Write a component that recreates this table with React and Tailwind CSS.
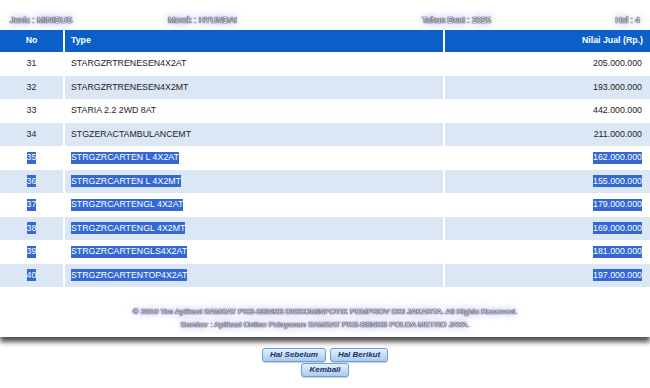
import React from 'react';

const rows = [
  { no: 31, type: 'STARGZRTRENESEN4X2AT', nilai: '205.000.000' },
  { no: 32, type: 'STARGZRTRENESEN4X2MT', nilai: '193.000.000' },
  { no: 33, type: 'STARIA 2.2 2WD 8AT', nilai: '442.000.000' },
  { no: 34, type: 'STGZERACTAMBULANCEMT', nilai: '211.000.000' },
  { no: 35, type: 'STRGZRCARTEN L 4X2AT', nilai: '162.000.000', sel: true },
  { no: 36, type: 'STRGZRCARTEN L 4X2MT', nilai: '155.000.000', sel: true },
  { no: 37, type: 'STRGZRCARTENGL 4X2AT', nilai: '179.000.000', sel: true },
  { no: 38, type: 'STRGZRCARTENGL 4X2MT', nilai: '169.000.000', sel: true },
  { no: 39, type: 'STRGZRCARTENGLS4X2AT', nilai: '181.000.000', sel: true },
  { no: 40, type: 'STRGZRCARTENTOP4X2AT', nilai: '197.000.000', sel: true },
];

const glow =
  'text-[#f4f4f4] [text-shadow:0_0_1px_#1c1c3a,0_0_1px_#1c1c3a,0_0_1px_#1c1c3a,0_0_8px_#8f8ff0,0_0_8px_#b0b0f5]';

const Cell = ({ sel, children }) =>
  sel ? <span className="bg-[#3469d4] text-white leading-[11px] py-[0.5px]">{children}</span> : children;

const Btn = ({ children }) => (
  <button className="h-[14px] px-[7px] rounded-[3px] border border-[#6f9fd6] bg-gradient-to-b from-[#e2f0fd] to-[#a8ccef] text-[8px] font-bold italic leading-none text-[#1b2f66] shadow-[0_1px_1px_rgba(0,0,0,0.2)]">
    {children}
  </button>
);

export default function App() {
  return (
    <div className="w-[650px] h-[388px] bg-white font-['Liberation_Sans',Arial,sans-serif] overflow-hidden">
      <div className="bg-white shadow-[0_5px_5px_rgba(70,70,70,0.95)]">
        <div className="h-[30px] pt-[14px] flex text-[8.5px] leading-[12px]">
          <div className={`pl-[10px] w-[168px] ${glow}`}>Jenis : MINIBUS</div>
          <div className={`w-[254px] ${glow}`}>Merek : HYUNDAI</div>
          <div className={`flex-1 ${glow}`}>Tahun Buat : 2025</div>
          <div className={`pr-[10px] ${glow}`}>Hal : 4</div>
        </div>

        <div className="grid grid-cols-[63px_378px_205px] gap-x-[2px] text-[8.8px] text-[#222]">
          <div className="h-[22px] bg-[#0b5fc9] text-white font-bold flex items-center justify-center">No</div>
          <div className="h-[22px] bg-[#0b5fc9] text-white font-bold flex items-center pl-[6px]">Type</div>
          <div className="h-[22px] bg-[#0b5fc9] text-white font-bold flex items-center justify-end pr-[7px]">Nilai Jual (Rp.)</div>
          {rows.map((r, i) => {
            const bg = i % 2 ? 'bg-[#dce7f5]' : 'bg-white';
            return (
              <React.Fragment key={r.no}>
                <div className={`h-[23.5px] ${bg} flex items-center justify-center`}>
                  <Cell sel={r.sel}>{r.no}</Cell>
                </div>
                <div className={`h-[23.5px] ${bg} flex items-center pl-[6px]`}>
                  <Cell sel={r.sel}>{r.type}</Cell>
                </div>
                <div className={`h-[23.5px] ${bg} flex items-center justify-end pr-[8px]`}>
                  <Cell sel={r.sel}>{r.nilai}</Cell>
                </div>
              </React.Fragment>
            );
          })}
        </div>

        <div className="h-[50px] pt-[18px] flex flex-col items-center text-[7.9px] leading-[13px]">
          <div className={glow}>© 2010 Tim Aplikasi SAMSAT PKB-BBNKB DISKOMINFOTIK PEMPROV DKI JAKARTA. All Rights Reserved.</div>
          <div className={glow}>Sumber : Aplikasi Online Pelayanan SAMSAT PKB-BBNKB POLDA METRO JAYA.</div>
        </div>
      </div>

      <div className="pt-[11px] flex flex-col items-center gap-[1px]">
        <div className="flex gap-[4px]">
          <Btn>Hal Sebelum</Btn>
          <Btn>Hal Berikut</Btn>
        </div>
        <Btn>Kembali</Btn>
      </div>
    </div>
  );
}
